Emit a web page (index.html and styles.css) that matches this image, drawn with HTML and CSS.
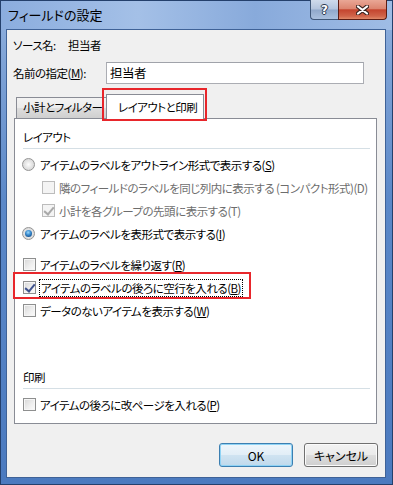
FILE: index.html
```html
<!DOCTYPE html>
<html lang="ja">
<head>
  <meta charset="UTF-8" />
  <title>フィールドの設定</title>
  <link rel="stylesheet" href="styles.css">
</head>
<body>
  <div class="window">
    <div class="titlebar">
      <span class="title">フィールドの設定</span>
      <div class="caption-btns">
        <span class="cap-btn help">?</span>
        <span class="cap-btn close">
          <svg width="13" height="10" viewBox="0 0 13 10">
            <path d="M2 1.5 L11 8.5 M11 1.5 L2 8.5" stroke="#3b2420" stroke-width="4.2" stroke-linecap="round"/>
            <path d="M2 1.5 L11 8.5 M11 1.5 L2 8.5" stroke="#fff" stroke-width="2.2" stroke-linecap="round"/>
          </svg>
        </span>
      </div>
    </div>

    <div class="client">
      <div class="source-row"><span class="source-label">ソース名:</span>担当者</div>
      <div class="name-row">
        <label class="name-label">名前の指定(<u>M</u>):</label>
        <div class="textbox">担当者</div>
      </div>

      <div class="tabs">
        <div class="tab">小計とフィルター</div>
        <div class="tab active">レイアウトと印刷</div>
        <div class="mark mark-tab"></div>
      </div>

      <div class="panel">
        <div class="group-title">レイアウト</div>
        <div class="rows first">
          <div class="row"><span class="radio"></span>アイテムのラベルをアウトライン形式で表示する(<u>S</u>)</div>
          <div class="row sub disabled"><span class="check"></span>隣のフィールドのラベルを同じ列内に表示する (コンパクト形式)(D)</div>
          <div class="row sub disabled"><span class="check on"></span>小計を各グループの先頭に表示する(T)</div>
          <div class="row"><span class="radio on"></span>アイテムのラベルを表形式で表示する(<u>I</u>)</div>
        </div>
        <div class="rows second">
          <div class="row"><span class="check"></span>アイテムのラベルを繰り返す(<u>R</u>)</div>
          <div class="row marked"><span class="check on"></span><span class="focus">アイテムのラベルの後ろに空行を入れる(<u>B</u>)</span><div class="mark mark-row"></div></div>
          <div class="row"><span class="check"></span>データのないアイテムを表示する(<u>W</u>)</div>
        </div>

        <div class="group-title print">印刷</div>
        <div class="rows first">
          <div class="row"><span class="check"></span>アイテムの後ろに改ページを入れる(<u>P</u>)</div>
        </div>
      </div>

      <div class="buttons">
        <button class="btn default">OK</button>
        <button class="btn">キャンセル</button>
      </div>
    </div>
  </div>
</body>
</html>
```

FILE: styles.css
```css
* {
  margin: 0;
  padding: 0;
  box-sizing: border-box;
}
body {
  width: 393px;
  height: 485px;
  overflow: hidden;
  font-family: "Noto Sans CJK JP", "Liberation Sans", sans-serif;
  font-size: 11.5px;
  letter-spacing: -0.5px;
  font-feature-settings: "palt";
  color: #000;
  background: #fff;
}
u {
  text-decoration: underline;
  text-underline-offset: 1px;
}
.window {
  width: 393px;
  height: 485px;
  border: 1px solid #24406c;
  background: linear-gradient(to bottom, #93b3df 0, #7fa3d6 60px, #5b88c8 200px, #4b7abf 100%);
  display: flex;
  flex-direction: column;
}
.titlebar {
  height: 29px;
  display: flex;
  align-items: flex-start;
  justify-content: space-between;
  background: linear-gradient(to right, #8badde 0, #a4c0e7 35%, #88aadb 65%, #9fbce5 100%);
}
.title {
  margin: 5px 0 0 7px;
  font-size: 13px;
  letter-spacing: 0;
  line-height: 17px;
}
.caption-btns {
  display: flex;
  margin-right: 5px;
  margin-top: -1px;
}
.cap-btn {
  height: 20px;
  display: flex;
  align-items: center;
  justify-content: center;
  border: 1px solid #3f5778;
  border-top: none;
}
.help {
  width: 28px;
  border-right: none;
  border-radius: 0 0 0 4px;
  background: linear-gradient(to bottom, #cfdbeb 0, #b3c4dd 48%, #90a8ca 52%, #aac0de 100%);
  color: #fff;
  font-family: "DejaVu Sans", sans-serif;
  font-weight: bold;
  font-size: 12px;
  letter-spacing: 0;
  text-shadow: 0 0 1px #2e3c52, 1px 0 0 #2e3c52, -1px 0 0 #2e3c52, 0 1px 0 #2e3c52, 0 -1px 0 #2e3c52;
}
.close {
  width: 49px;
  border-color: #5c1d14;
  border-radius: 0 0 4px 0;
  background: linear-gradient(to bottom, #e9a796 0, #dc8570 45%, #c4452f 52%, #d0644a 85%, #e08a6a 100%);
}
.client {
  margin: 0 7px 7px 6px;
  flex: 1;
  background: #f0f0f0;
  box-shadow: 0 0 0 1px #3f6297;
  padding: 0 7px 0 6px;
  display: flex;
  flex-direction: column;
}
.source-row {
  margin-top: 7px;
  line-height: 16px;
  height: 16px;
  display: flex;
}
.source-label {
  width: 55px;
}
.name-row {
  margin-top: 9px;
  display: flex;
  align-items: center;
  height: 22px;
}
.name-label {
  width: 93px;
}
.textbox {
  width: 258px;
  height: 22px;
  border: 1px solid #abadb3;
  border-top-color: #a0a3aa;
  background: #fff;
  padding: 0 3px;
  line-height: 20px;
  font-size: 12.5px;
}
.tabs {
  margin-top: 10px;
  height: 24px;
  display: flex;
  align-items: flex-end;
  padding-left: 3px;
  position: relative;
  z-index: 1;
}
.tab {
  height: 21px;
  width: 90px;
  border: 1px solid #898c95;
  border-bottom: none;
  border-right: none;
  background: linear-gradient(to bottom, #f3f3f3 0, #ebebeb 50%, #dddddd 52%, #cfcfcf 100%);
  padding-left: 6px;
  line-height: 19px;
  white-space: nowrap;
}
.tab.active {
  height: 25px;
  width: 98px;
  margin-bottom: -1px;
  border-right: 1px solid #898c95;
  background: #fff;
  padding-left: 11px;
  line-height: 24px;
}
.mark {
  position: absolute;
  border: 2px solid #e8262b;
  pointer-events: none;
}
.mark-tab {
  left: 89px;
  top: -6px;
  width: 105px;
  height: 33px;
}
.panel {
  margin-left: 1px;
  width: 363px;
  height: 306px;
  border: 1px solid #898c95;
  background: #fff;
  padding: 9px 0 0 7px;
}
.group-title {
  line-height: 18px;
  height: 21px;
  padding-bottom: 2px;
  border-bottom: 1px solid #d5dfe5;
  margin-left: 1px;
  margin-right: 6px;
}
.group-title.print {
  margin-top: 46px;
}
.rows.first {
  margin-top: 4px;
}
.rows.second {
  margin-top: 8px;
}
.row {
  height: 23px;
  display: flex;
  align-items: center;
  white-space: nowrap;
  position: relative;
}
.row.sub {
  padding-left: 19px;
}
.row.disabled {
  color: #6d6d6d;
}
.radio {
  width: 13px;
  height: 13px;
  border-radius: 50%;
  border: 1px solid #949494;
  background: radial-gradient(circle at 50% 50%, #fdfdfd 0, #e6e6e6 45%, #cdcdcd 100%);
  margin-right: 5px;
  position: relative;
  flex: none;
}
.radio.on::after {
  content: "";
  position: absolute;
  left: 2px;
  top: 2px;
  width: 7px;
  height: 7px;
  border-radius: 50%;
  background: radial-gradient(circle at 45% 35%, #9ad8fb 0, #3d8ed0 40%, #124f8f 80%, #0c3768 100%);
}
.check {
  width: 13px;
  height: 13px;
  margin-left: 1px;
  margin-right: 4px;
  border: 1px solid #8e8f8f;
  background: linear-gradient(135deg, #d6d6d6 0, #eeeeee 55%, #fcfcfc 100%);
  box-shadow: inset 0 0 0 1px #f6f6f6;
  position: relative;
  flex: none;
}
.check.on::after {
  content: "";
  position: absolute;
  left: 3px;
  top: 0px;
  width: 4px;
  height: 8px;
  border: solid #3f528d;
  border-width: 0 2px 2px 0;
  transform: rotate(40deg);
}
.disabled .check {
  border-color: #bcbcbc;
  background: #f4f4f4;
  box-shadow: none;
}
.disabled .check.on::after {
  border-color: #a9a9a9;
}
.focus {
  outline: 1px dotted #000;
  outline-offset: 0;
  padding: 0 1px;
  line-height: 16px;
}
.mark-row {
  left: -9px;
  top: -4px;
  width: 238px;
  height: 27px;
}
.buttons {
  margin-top: 19px;
  display: flex;
  justify-content: flex-end;
  gap: 11px;
}
.btn {
  width: 74px;
  height: 24px;
  font-family: "Noto Sans CJK JP", "Liberation Sans", sans-serif;
  font-size: 12px;
  letter-spacing: 0;
  font-feature-settings: "palt";
  color: #000;
  border: 1px solid #707070;
  border-radius: 3px;
  background: linear-gradient(to bottom, #f2f2f2 0, #ebebeb 48%, #dddddd 52%, #cfcfcf 100%);
  box-shadow: inset 0 0 0 1px #fbfbfb;
}
.btn.default {
  border-color: #3c7fb1;
  box-shadow: inset 0 0 0 1px #8fd3f5;
  background: linear-gradient(to bottom, #eef6fb 0, #e2eef7 48%, #cfe3f1 52%, #bfd9ec 100%);
}
```
